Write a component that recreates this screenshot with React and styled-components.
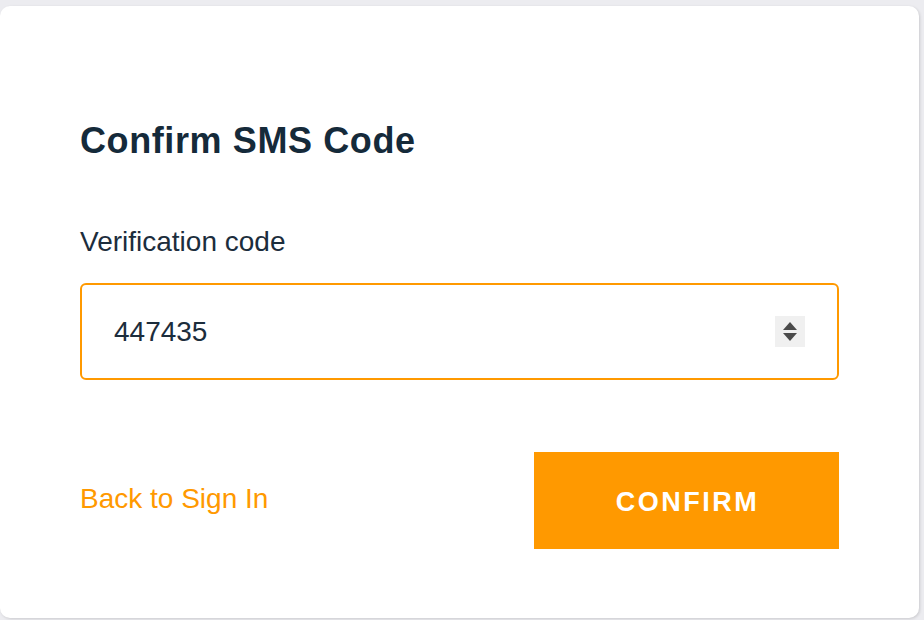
import React, { useState } from 'react';
import styled, { createGlobalStyle } from 'styled-components';

const GlobalStyle = createGlobalStyle`
  html, body {
    margin: 0;
    padding: 0;
    background: #ececf0;
    font-family: "Liberation Sans", Arial, sans-serif;
  }
`;

const Page = styled.div`
  width: 924px;
  height: 620px;
  padding: 6px 5px 0 0;
  box-sizing: border-box;
  overflow: hidden;
`;

const Card = styled.form`
  background: #fff;
  border-radius: 10px;
  box-shadow: 1px 1px 3px rgba(0, 0, 0, 0.14);
  height: 612px;
  padding: 115px 80px 0 80px;
  box-sizing: border-box;
`;

const Title = styled.h2`
  margin: 0;
  font-size: 36px;
  font-weight: 700;
  letter-spacing: 0.6px;
  color: #152a3a;
  line-height: 40px;
`;

const Label = styled.label`
  display: block;
  margin-top: 65px;
  font-size: 28px;
  color: #1c2d3c;
  line-height: 32px;
`;

const InputBox = styled.div`
  margin-top: 25px;
  height: 97px;
  border: 2px solid #ff9900;
  border-radius: 6px;
  box-sizing: border-box;
  display: flex;
  align-items: center;
  padding: 0 32px 0 32px;
`;

const CodeInput = styled.input`
  flex: 1;
  border: none;
  outline: none;
  background: transparent;
  font-family: inherit;
  font-size: 28px;
  color: #1c2d3c;
  padding: 0;
`;

const Spinner = styled.div`
  width: 30px;
  height: 31px;
  background: #f0f0f0;
  display: flex;
  flex-direction: column;
  align-items: center;
  justify-content: center;
  gap: 3px;
`;

const Arrow = styled.button`
  border: none;
  padding: 0;
  background: none;
  width: 0;
  height: 0;
  border-left: 7px solid transparent;
  border-right: 7px solid transparent;
  ${(p) => (p.$up ? 'border-bottom: 8px solid #4a4a4a;' : 'border-top: 8px solid #4a4a4a;')}
  cursor: pointer;
`;

const Actions = styled.div`
  margin-top: 72px;
  display: flex;
  align-items: center;
  justify-content: space-between;
`;

const BackLink = styled.a`
  color: #ff9900;
  font-size: 28px;
  text-decoration: none;
  cursor: pointer;
  margin-bottom: 4px;
`;

const ConfirmButton = styled.button`
  width: 305px;
  height: 97px;
  background: #ff9900;
  border: none;
  color: #fff;
  font-family: inherit;
  font-size: 27px;
  font-weight: 700;
  letter-spacing: 2.5px;
  padding: 4px 0 0 2px;
  cursor: pointer;
`;

export default function App() {
  const [code, setCode] = useState('447435');

  const step = (d) => setCode(String(Math.max(0, Number(code) + d)));

  return (
    <>
      <GlobalStyle />
      <Page>
        <Card onSubmit={(e) => e.preventDefault()}>
          <Title>Confirm SMS Code</Title>
          <Label htmlFor="code">Verification code</Label>
          <InputBox>
            <CodeInput id="code" value={code} onChange={(e) => setCode(e.target.value)} />
            <Spinner>
              <Arrow type="button" $up onClick={() => step(1)} />
              <Arrow type="button" onClick={() => step(-1)} />
            </Spinner>
          </InputBox>
          <Actions>
            <BackLink>Back to Sign In</BackLink>
            <ConfirmButton type="submit">CONFIRM</ConfirmButton>
          </Actions>
        </Card>
      </Page>
    </>
  );
}
